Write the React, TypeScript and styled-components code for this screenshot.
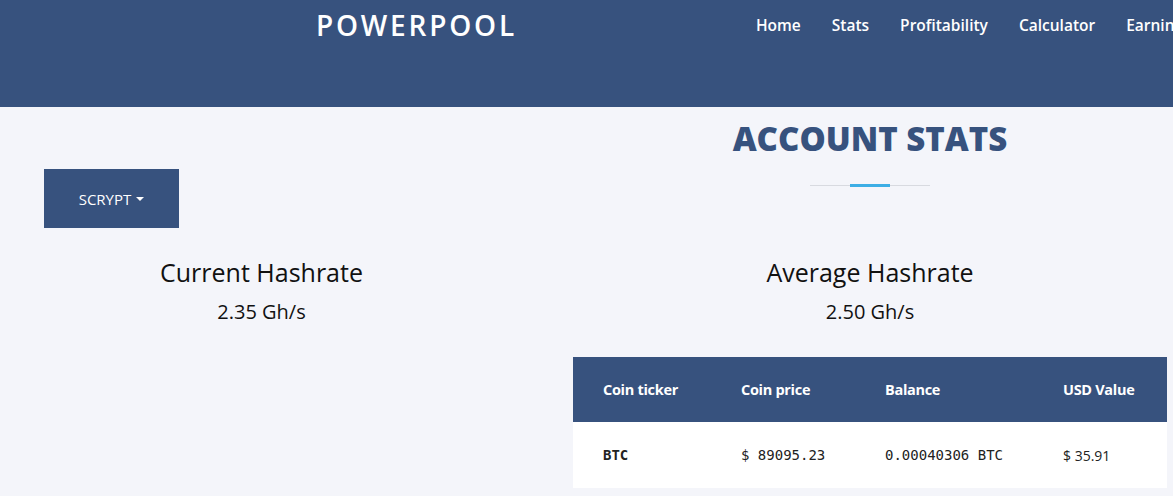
import styled, { createGlobalStyle } from "styled-components";

const navy = "#37527e";

const GlobalStyle = createGlobalStyle`
  html, body {
    margin: 0;
    padding: 0;
    background: #f4f5fa;
    font-family: "Open Sans", "Liberation Sans", sans-serif;
    color: #111;
  }
`;

const Header = styled.header`
  height: 107px;
  background: ${navy};
  display: flex;
  align-items: flex-start;
  padding-left: 316px;
  overflow: hidden;
  white-space: nowrap;
`;

const Logo = styled.div`
  color: #fff;
  font-size: 28px;
  font-weight: 600;
  letter-spacing: 2.8px;
  line-height: 50px;
`;

const Nav = styled.nav`
  display: flex;
  gap: 31px;
  margin-left: 239px;
`;

const NavLink = styled.a`
  color: #fff;
  font-size: 15.5px;
  font-weight: 600;
  line-height: 50px;
  text-decoration: none;
`;

const Content = styled.main`
  display: grid;
  grid-template-columns: 435px 594px;
  column-gap: 94px;
  padding-left: 44px;
`;

const Cell = styled.div<{ center?: boolean }>`
  display: flex;
  flex-direction: column;
  align-items: ${({ center }) => (center ? "center" : "flex-start")};
`;

const Dropdown = styled.button`
  margin-top: 62px;
  width: 135px;
  height: 59px;
  background: ${navy};
  color: #fff;
  border: none;
  font-family: inherit;
  font-size: 15px;
  display: flex;
  align-items: center;
  justify-content: center;
  gap: 5px;
  cursor: pointer;
`;

const Caret = styled.span`
  width: 0;
  height: 0;
  border-left: 4px solid transparent;
  border-right: 4px solid transparent;
  border-top: 4px solid #fff;
`;

const Title = styled.h1`
  margin: 12px 0 0;
  font-size: 33px;
  font-weight: 800;
  color: ${navy};
  line-height: 40px;
`;

const Divider = styled.div`
  position: relative;
  margin-top: 26px;
  width: 120px;
  height: 1px;
  background: #d8dae0;
  &::after {
    content: "";
    position: absolute;
    left: 40px;
    top: -1px;
    width: 40px;
    height: 3px;
    background: #3daee5;
  }
`;

const StatLabel = styled.div`
  margin-top: 28px;
  font-size: 25px;
  line-height: 32px;
`;

const StatValue = styled.div`
  margin-top: 10px;
  font-size: 20px;
  line-height: 28px;
`;

const Table = styled.table`
  grid-column: 2;
  margin-top: 31px;
  width: 594px;
  border-collapse: collapse;
  table-layout: fixed;
`;

const Th = styled.th<{ w?: number }>`
  width: ${({ w }) => (w ? `${w}px` : "auto")};
  height: 65px;
  padding: 0 0 0 30px;
  background: ${navy};
  color: #fff;
  text-align: left;
  font-size: 14.5px;
  font-weight: 700;
  letter-spacing: -0.3px;
  white-space: nowrap;
`;

const Td = styled.td<{ mono?: boolean; bold?: boolean }>`
  height: 66px;
  padding: 0 0 0 30px;
  background: #fff;
  font-family: ${({ mono }) =>
    mono ? `"DejaVu Sans Mono", monospace` : "inherit"};
  font-size: 14px;
  font-weight: ${({ bold }) => (bold ? 700 : 400)};
  color: #222;
  white-space: nowrap;
`;

export default function App() {
  return (
    <>
      <GlobalStyle />
      <Header>
        <Logo>POWERPOOL</Logo>
        <Nav>
          {["Home", "Stats", "Profitability", "Calculator", "Earnings"].map((n) => (
            <NavLink key={n} href="#">
              {n}
            </NavLink>
          ))}
        </Nav>
      </Header>
      <Content>
        <Cell>
          <Dropdown>
            SCRYPT <Caret />
          </Dropdown>
        </Cell>
        <Cell center>
          <Title>ACCOUNT STATS</Title>
          <Divider />
        </Cell>
        <Cell center>
          <StatLabel>Current Hashrate</StatLabel>
          <StatValue>2.35 Gh/s</StatValue>
        </Cell>
        <Cell center>
          <StatLabel>Average Hashrate</StatLabel>
          <StatValue>2.50 Gh/s</StatValue>
        </Cell>
        <Table>
          <thead>
            <tr>
              <Th w={108}>Coin ticker</Th>
              <Th w={114}>Coin price</Th>
              <Th w={148}>Balance</Th>
              <Th>USD Value</Th>
            </tr>
          </thead>
          <tbody>
            <tr>
              <Td mono bold>BTC</Td>
              <Td mono>$ 89095.23</Td>
              <Td mono>0.00040306 BTC</Td>
              <Td>$ 35.91</Td>
            </tr>
          </tbody>
        </Table>
      </Content>
    </>
  );
}
